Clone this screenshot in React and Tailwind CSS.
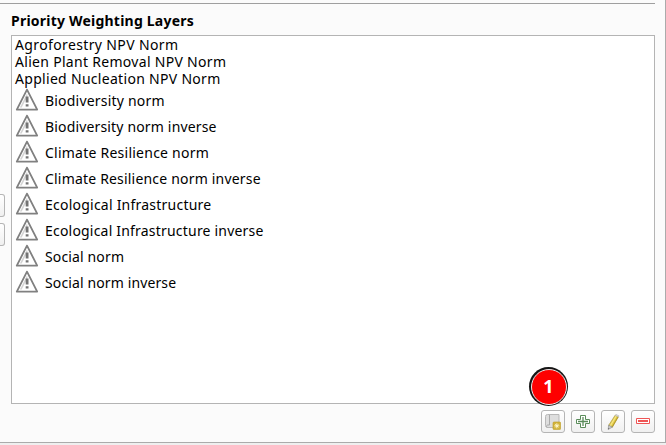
import React from "react";

const plainLayers = [
  { name: "Agroforestry NPV Norm", spacing: "tracking-[0.37px]" },
  { name: "Alien Plant Removal NPV Norm", spacing: "tracking-[0.3px]" },
  { name: "Applied Nucleation NPV Norm", spacing: "tracking-[0.3px]" },
];

const warningLayers = [
  { name: "Biodiversity norm", spacing: "tracking-[0.2px]" },
  { name: "Biodiversity norm inverse", spacing: "tracking-[0.16px]" },
  { name: "Climate Resilience norm", spacing: "tracking-[0.24px]" },
  { name: "Climate Resilience norm inverse", spacing: "tracking-[0.19px]" },
  { name: "Ecological Infrastructure", spacing: "tracking-[0.23px]" },
  { name: "Ecological Infrastructure inverse", spacing: "tracking-[0.2px]" },
  { name: "Social norm", spacing: "tracking-[0.14px]" },
  { name: "Social norm inverse", spacing: "tracking-[0.12px]" },
];

function WarningIcon() {
  return (
    <svg className="h-6 w-6 shrink-0" viewBox="0 0 24 24" fill="none">
      <path d="M12 1.6 1.8 21.6h20.4Z" fill="#fff" stroke="#808080" strokeWidth="1.8" strokeLinejoin="round" />
      <path d="M12 5.4 4.9 19.4h1.8L12.6 8Z" fill="#d4d4d4" />
      <path d="M10.7 8.6h2.8v6h-2.8ZM10.7 16.2h2.8v2.2h-2.8Z" fill="#747474" />
    </svg>
  );
}

function LayerIcon() {
  return (
    <svg className="h-4 w-4" viewBox="0 0 16 16" fill="none">
      <path d="M4.5.5h9.5v13h-11.5a2 2 0 0 1-2-2v-9a2 2 0 0 1 2-2Z" fill="#dedede" stroke="#b8b8b8" />
      <path d="M4.5.5v10.5h-2a1.3 1.3 0 0 0 0 2.5" stroke="#aaa" />
      <rect x="8" y="8" width="7.6" height="7.6" rx="1" fill="#d2b43c" stroke="#bc9c22" strokeWidth=".6" />
      <path d="M11.8 9.3v5M9.3 11.8h5M10.2 10.2l3.2 3.2M13.4 10.2l-3.2 3.2" stroke="#fff8d0" strokeWidth=".9" />
    </svg>
  );
}

function PlusIcon() {
  return (
    <svg className="h-4 w-4" viewBox="0 0 16 16" fill="none">
      <path d="M5.5 1.5h5v4h4v4h-4v4h-5v-4h-4v-4h4Z" fill="#fff" stroke="#5a8c5a" />
      <path d="M8 3v9M3 7.5h10" stroke="#5a8c5a" strokeWidth="1.3" />
    </svg>
  );
}

function PencilIcon() {
  return (
    <svg className="h-4 w-4" viewBox="0 0 16 16" fill="none">
      <path d="m10.2 1.2 3.2 1.6-6 10.4-3.8-1.8Z" fill="#e4cc4a" stroke="#a99742" strokeWidth=".7" />
      <path d="m11.2 2-6 10" stroke="#f7e98b" strokeWidth="1.1" />
      <path d="m12.8 3.2-5.8 10" stroke="#b39a2b" strokeWidth=".9" />
      <path d="m3.6 11.2 3.8 1.9-4.2 2.4Z" fill="#c9c9c9" stroke="#888" strokeWidth=".6" />
      <path d="m10.2 1.2.8-.9 3 1.5-.6 1.1Z" fill="#ddd" stroke="#aaa" strokeWidth=".4" />
      <path d="m3.4 14 1 .5-1.3 1Z" fill="#555" />
    </svg>
  );
}

function MinusIcon() {
  return (
    <svg className="h-4 w-4" viewBox="0 0 16 16" fill="none">
      <path d="M1.5 4.5h13v5h-13Z" fill="#fff" stroke="#ef5555" />
      <path d="M3 7h10" stroke="#ef5555" strokeWidth="2" />
    </svg>
  );
}

function ToolButton({ label, children }) {
  return (
    <button
      aria-label={label}
      className="flex h-[23px] w-6 items-center justify-center rounded-[3px] border border-[#b5b5b5] bg-linear-to-b from-white to-[#f0f0f0]"
    >
      {children}
    </button>
  );
}

export default function App() {
  return (
    <div className="flex h-[445px] w-[666px] flex-col overflow-hidden bg-[#efefef] font-['Noto_Sans','Open_Sans',sans-serif] text-black">
      <div className="flex h-[443px] border-r border-b border-[#ababab] bg-[#fbfbfb]">
        <div className="flex w-[11px] shrink-0 flex-col border-t border-transparent pt-[193px]">
          <div className="h-[23px] w-[5px] rounded-r-[3px] border border-l-0 border-[#b5b5b5] bg-linear-to-b from-white to-[#f0f0f0]" />
          <div className="mt-[6px] h-[23px] w-[5px] rounded-r-[3px] border border-l-0 border-[#b5b5b5] bg-linear-to-b from-white to-[#f0f0f0]" />
        </div>
        <div className="flex w-[644px] flex-col pt-[3px]">
          <div className="-ml-[11px] h-px shrink-0 bg-[#9f9f9f]" />
          <h2 className="flex h-[31px] shrink-0 items-center pt-px text-[14px] leading-[17px] font-bold whitespace-nowrap">
            <span className="tracking-[0.22px]">Priority Weighting Layers</span>
          </h2>
          <div className="relative h-[369px] shrink-0 border border-[#b4b4b4] bg-white text-[14px] whitespace-nowrap">
            <ul className="pl-[3px]">
              {plainLayers.map((layer) => (
                <li key={layer.name} className="h-[17px] leading-[17px]">
                  <span className={layer.spacing}>{layer.name}</span>
                </li>
              ))}
              {warningLayers.map((layer) => (
                <li key={layer.name} className="flex h-[26px] items-center gap-[6px] leading-[17px]">
                  <WarningIcon />
                  <span className={layer.spacing}>{layer.name}</span>
                </li>
              ))}
            </ul>
            <div className="absolute top-[331px] left-[517px] flex h-[39px] w-[39px] items-center justify-center rounded-full bg-[#151515] p-[1.5px]">
              <div className="flex h-full w-full items-center justify-center rounded-full border border-[#e8e8e8] bg-[#fe0000] text-[18px] font-bold text-white">
                1
              </div>
            </div>
          </div>
          <div className="flex justify-end gap-[6px] pt-[6px]">
            <ToolButton label="Add layer"><LayerIcon /></ToolButton>
            <ToolButton label="Add"><PlusIcon /></ToolButton>
            <ToolButton label="Edit"><PencilIcon /></ToolButton>
            <ToolButton label="Remove"><MinusIcon /></ToolButton>
          </div>
        </div>
      </div>
    </div>
  );
}
